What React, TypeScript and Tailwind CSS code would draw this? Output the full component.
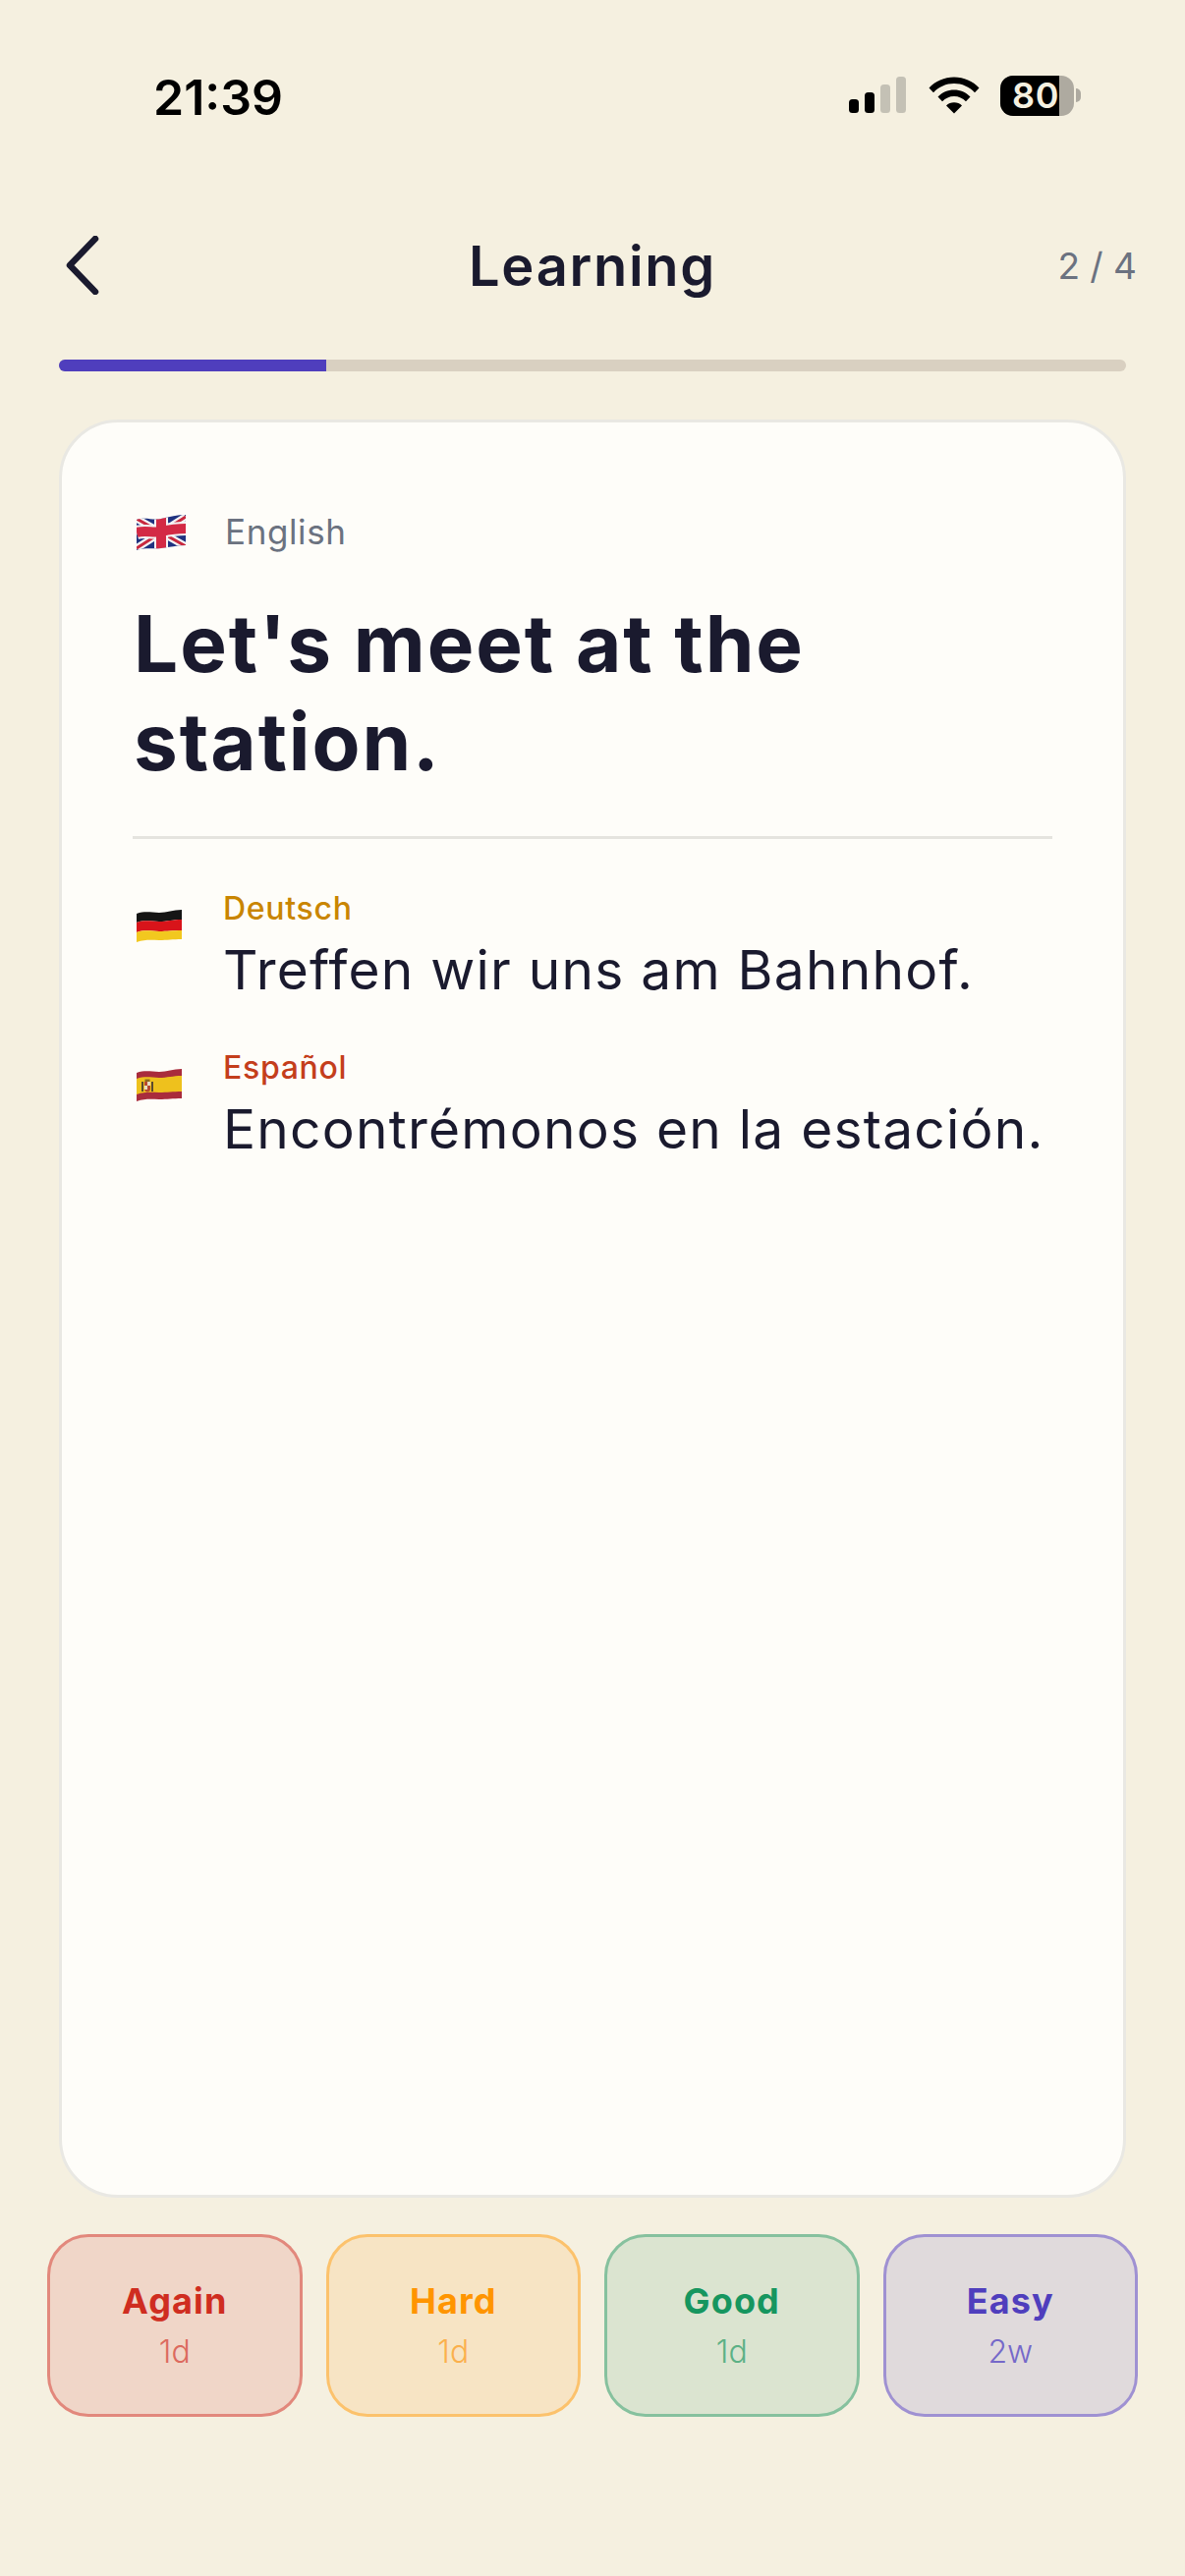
const FONT = "font-['Inter','Noto_Sans',sans-serif]";

const RATINGS = [
  { label: "Again", time: "1d", box: "border-[#e2887c] bg-[#f0d6c8]", title: "text-[#cf2d20]", sub: "text-[#dc6a5e]" },
  { label: "Hard", time: "1d", box: "border-[#fcc26c] bg-[#f7e4c4]", title: "text-[#ff9500]", sub: "text-[#fbb04c]" },
  { label: "Good", time: "1d", box: "border-[#86c19e] bg-[#dbe4d0]", title: "text-[#16965f]", sub: "text-[#5cb186]" },
  { label: "Easy", time: "2w", box: "border-[#9f91d2] bg-[#e0dadc]", title: "text-[#4f3ebd]", sub: "text-[#7568c9]" },
];

function Signal() {
  return (
    <svg width="60" height="38" viewBox="0 0 60 38">
      <rect x="0" y="23" width="10" height="14" rx="3.5" fill="#000" />
      <rect x="16" y="16" width="10" height="21" rx="3.5" fill="#000" />
      <rect x="32" y="8" width="10" height="29" rx="3.5" fill="#c4c1b5" />
      <rect x="48" y="0" width="10" height="37" rx="3.5" fill="#c4c1b5" />
    </svg>
  );
}

function Wifi() {
  return (
    <svg width="52" height="38" viewBox="0 0 52 38">
      <path d="M0.5 11.5C7 4.5 16 0.5 26 0.5s19 4 25.5 11l-4.5 4.7C41.500 10.300 34 7 26 7S10.500 10.300 5 16.200z" fill="#000" />
      <path d="M9.500 20.500C13.800 16 19.600 13.500 26 13.500s12.200 2.500 16.500 7L38 25.200C34.800 22 30.600 20 26 20s-8.800 2-12 5.200z" fill="#000" />
      <path d="M18 29.500c2.100-2 4.900-3.200 8-3.200s5.900 1.200 8 3.200l-8 8z" fill="#000" />
    </svg>
  );
}

function Battery() {
  return (
    <div className="flex items-center">
      <div className="flex h-[41px] w-[75px] overflow-hidden rounded-[13px] bg-[#aeaaa0]">
        <div className="flex h-full w-[60px] items-center justify-end bg-black">
          <span className="text-[36px] font-semibold leading-none tracking-[0.6px] text-[#f5f0e0]">80</span>
        </div>
      </div>
      <div className="ml-[2px] h-[14px] w-[5px] rounded-r-full bg-[#aeaaa0]" />
    </div>
  );
}

function FlagUK() {
  return (
    <svg width="50" height="36" viewBox="0 0 50 36" className="mt-[2px] shrink-0">
      <defs>
        <clipPath id="uk-wave">
          <path d="M0 5C10 2 16 6 25 4s16-4 25-4v31c-9 0-16 2-25 3S10 33 0 36z" />
        </clipPath>
      </defs>
      <g clipPath="url(#uk-wave)">
        <rect width="50" height="36" fill="#1f3280" />
        <path d="M0 4L50 32M50 2L0 34" stroke="#f4f4f4" strokeWidth="7.500" />
        <path d="M0 4L50 32M50 2L0 34" stroke="#c8283e" strokeWidth="3" />
        <path d="M25 0V36M0 18C10 15 16 19 25 17s16-3 25-3" stroke="#f4f4f4" strokeWidth="14" fill="none" />
        <path d="M25 0V36M0 18C10 15 16 19 25 17s16-3 25-3" stroke="#d32a45" strokeWidth="10" fill="none" />
      </g>
    </svg>
  );
}

function FlagDE() {
  return (
    <svg width="46" height="34" viewBox="0 0 46 34" className="shrink-0">
      <path d="M0 5C9 2 15 4 23 4s14-3 23-3v10c-9 0-15 2-23 2S9 11 0 14z" fill="#151515" />
      <path d="M0 14C9 11 15 13 23 13s14-2 23-2v11c-9 0-15 1-23 1S9 21 0 24z" fill="#d8141a" />
      <path d="M0 24C9 21 15 23 23 23s14-1 23-1v9c-9 0-15 1-23 1s-14-1-23 2z" fill="#f2c81f" />
    </svg>
  );
}

function FlagES() {
  return (
    <svg width="46" height="34" viewBox="0 0 46 34" className="shrink-0">
      <path d="M0 5C9 2 15 4 23 4s14-3 23-3v30c-9 0-15 1-23 1s-14-1-23 2z" fill="#a92c3c" />
      <path d="M0 11C9 8 15 10 23 10s14-2 23-2v16c-9 0-15 1-23 1S9 24 0 27z" fill="#eec11d" />
      {/* coat of arms */}
      <rect x="5" y="14" width="2" height="10" fill="#5a4a30" />
      <rect x="15" y="14" width="2" height="10" fill="#5a4a30" />
      <path d="M8 14h6v7.500c0 2-1.500 3-3 3s-3-1-3-3z" fill="#b8482f" />
      <rect x="11" y="14" width="3" height="4" fill="#e8dcc0" />
      <rect x="8" y="18" width="3" height="4" fill="#e8dcc0" />
      <rect x="8.500" y="11.500" width="5" height="2.500" fill="#8f6a20" />
    </svg>
  );
}

function Translation({ flag, lang, color, text }: { flag: React.ReactNode; lang: string; color: string; text: string }) {
  return (
    <div className="flex">
      <div className="w-[92px] pl-[4px] pt-[19px]">{flag}</div>
      <div>
        <div className={`text-[32px] font-medium leading-[38px] tracking-[0.7px] ${color}`}>{lang}</div>
        <div className="mt-[9px] whitespace-nowrap text-[55px] leading-[68px] tracking-[1.25px] text-[#1a1a2e]">{text}</div>
      </div>
    </div>
  );
}

export default function App() {
  return (
    <div className={`${FONT} flex h-[2622px] w-[1206px] flex-col overflow-hidden bg-[#f5f0e0]`}>
      {/* Status bar */}
      <div className="flex h-[194px] items-center justify-between pl-[156px] pr-[106px]">
        <span className="mt-[3px] text-[50px] font-semibold leading-none text-black">21:39</span>
        <div className="flex items-center gap-[21px]">
          <Signal />
          <Wifi />
          <Battery />
        </div>
      </div>

      {/* Nav */}
      <div className="relative flex h-[152px] items-center justify-between pl-[66px] pr-[49px]">
        <svg width="38" height="60" viewBox="0 0 38 60" fill="none">
          <path d="M31 3L5 30l26 27" stroke="#1a1a2e" strokeWidth="6.500" strokeLinecap="round" strokeLinejoin="round" />
        </svg>
        <span className="absolute inset-x-0 mt-[2px] text-center text-[56px] font-semibold leading-none tracking-[1.7px] text-[#1a1a2e]">Learning</span>
        <span className="text-[37px] leading-none text-[#6b7280]">2 / 4</span>
      </div>

      {/* Progress */}
      <div className="mx-[60px] mt-[20px] h-[12px] overflow-hidden rounded-full bg-[#d9d0c1]">
        <div className="h-full w-[25%] bg-[#4f3ebd]" />
      </div>

      {/* Card */}
      <div className="mx-[60px] mt-[49px] h-[1810px] rounded-[60px] border-[3px] border-[#e9e8e3] bg-[#fefdf9] px-[72px] pt-[92px]">
        <div className="flex items-center pl-[4px]">
          <FlagUK />
          <span className="ml-[40px] text-[35px] leading-none tracking-[0.6px] text-[#6b7280]">English</span>
        </div>
        <h1 className="ml-[1px] mt-[45px] text-[80px] font-bold leading-[100px] tracking-[1.9px] text-[#1a1a2e]">
          Let's meet at the
          <br />
          station.
        </h1>
        <div className="mt-[46px] h-[3px] bg-[#e5e4df]" />
        <div className="mt-[52px] flex flex-col gap-[47px]">
          <Translation flag={<FlagDE />} lang="Deutsch" color="text-[#c98500]" text="Treffen wir uns am Bahnhof." />
          <Translation flag={<FlagES />} lang="Español" color="text-[#c43e1c]" text="Encontrémonos en la estación." />
        </div>
      </div>

      {/* Rating buttons */}
      <div className="mt-[37px] grid grid-cols-4 gap-[24px] pl-[48px] pr-[48px]">
        {RATINGS.map((r) => (
          <button key={r.label} className={`flex h-[186px] flex-col items-center justify-center rounded-[42px] border-[3px] ${r.box}`}>
            <span className={`text-[36px] font-bold leading-[44px] tracking-[1.1px] ${r.title}`}>{r.label}</span>
            <span className={`mt-[10px] text-[32px] font-light leading-[40px] ${r.sub}`}>{r.time}</span>
          </button>
        ))}
      </div>
    </div>
  );
}
